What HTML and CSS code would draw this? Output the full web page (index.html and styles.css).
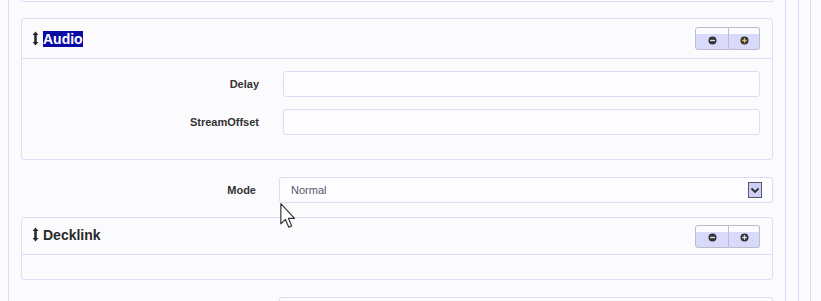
FILE: index.html
```html
<!DOCTYPE html>
<html lang="en">
<head>
    <meta charset="UTF-8">
    <title>Channel settings</title>
    <link rel="stylesheet" href="styles.css">
</head>
<body>
    <div class="frame-a">
        <div class="frame-b">
            <div class="frame-c">
                <div class="panel panel-prev"></div>

                <div class="panel">
                    <div class="panel-head head-audio">
                        <span class="title">
                            <svg class="sort-icon" width="7" height="15" viewBox="0 0 7 15"><path d="M3.5 0.5 L6.5 4 L0.5 4 Z M3.5 14.5 L6.5 11 L0.5 11 Z" fill="#2b2b2b"/><rect x="2.2" y="3" width="2.6" height="9" fill="#2b2b2b"/></svg>
                            <span class="selected">Audio</span>
                        </span>
                        <div class="btn-group">
                            <button class="tool-btn"><svg width="9" height="9" viewBox="0 0 9 9"><circle cx="4.5" cy="4.5" r="4" fill="#333"/><rect x="2" y="3.8" width="5" height="1.4" fill="#d8d8f0"/></svg></button>
                            <button class="tool-btn"><svg width="9" height="9" viewBox="0 0 9 9"><circle cx="4.5" cy="4.5" r="4" fill="#333"/><rect x="2.2" y="3.8" width="4.6" height="1.4" fill="#e8c070"/><rect x="3.8" y="2.2" width="1.4" height="4.6" fill="#e8c070"/></svg></button>
                        </div>
                    </div>
                    <div class="panel-body body-audio">
                        <div class="field">
                            <label for="delay">Delay</label>
                            <input type="text" id="delay">
                        </div>
                        <div class="field">
                            <label for="offset">StreamOffset</label>
                            <input type="text" id="offset">
                        </div>
                    </div>
                </div>

                <div class="field field-outer">
                    <label>Mode</label>
                    <div class="select">
                        <span>Normal</span>
                        <span class="arrow"><svg width="12" height="14" viewBox="0 0 12 14"><path d="M2.5 5.5 L6 9 L9.5 5.5" fill="none" stroke="#2a2a3a" stroke-width="1.8"/></svg></span>
                    </div>
                </div>

                <div class="panel panel-decklink">
                    <div class="panel-head head-decklink">
                        <span class="title">
                            <svg class="sort-icon" width="7" height="15" viewBox="0 0 7 15"><path d="M3.5 0.5 L6.5 4 L0.5 4 Z M3.5 14.5 L6.5 11 L0.5 11 Z" fill="#2b2b2b"/><rect x="2.2" y="3" width="2.6" height="9" fill="#2b2b2b"/></svg>
                            <span>Decklink</span>
                        </span>
                        <div class="btn-group">
                            <button class="tool-btn"><svg width="9" height="9" viewBox="0 0 9 9"><circle cx="4.5" cy="4.5" r="4" fill="#333"/><rect x="2" y="3.8" width="5" height="1.4" fill="#d8d8f0"/></svg></button>
                            <button class="tool-btn"><svg width="9" height="9" viewBox="0 0 9 9"><circle cx="4.5" cy="4.5" r="4" fill="#333"/><rect x="2.2" y="3.8" width="4.6" height="1.4" fill="#d8d8f0"/><rect x="3.8" y="2.2" width="1.4" height="4.6" fill="#d8d8f0"/></svg></button>
                        </div>
                    </div>
                    <div class="panel-body body-decklink"></div>
                </div>

                <div class="field field-outer field-next">
                    <label></label>
                    <div class="select"></div>
                </div>
            </div>
        </div>
    </div>

    <svg class="cursor" width="16" height="26" viewBox="0 0 12 20"><path d="M0.5 0.5 L0.5 16 L4 12.6 L6.6 18.6 L8.8 17.6 L6.3 11.8 L11 11.8 Z" fill="#fff" stroke="#333" stroke-width="0.9" stroke-linejoin="round"/></svg>
</body>
</html>
```

FILE: styles.css
```css
body {
    margin: 0;
    background: #fbfbfe;
    font-family: "Liberation Sans", Arial, sans-serif;
    color: #2e2e2e;
    overflow: hidden;
}
.frame-a {
    display: flex;
    box-sizing: border-box;
    width: 811px;
    height: 100vh;
    padding-right: 11px;
    border-right: 1px solid #d8d8fb;
}
.frame-b {
    display: flex;
    flex: 1;
    padding-right: 12px;
    border-right: 1px solid #d8d8fb;
}
.frame-c {
    flex: 1;
    margin-left: 8px;
    border-left: 1px solid #dedefa;
    border-right: 1px solid #d8d8fb;
}
.panel {
    margin: 0 12px;
    border: 1px solid #dedefa;
    border-radius: 3px;
    background: #fbfbfe;
}
.panel-prev {
    height: 1px;
    border-top: none;
    border-radius: 0 0 3px 3px;
    margin-bottom: 16px;
}
.panel-head {
    display: flex;
    align-items: center;
    justify-content: space-between;
    padding: 0 12px 0 10px;
    border-bottom: 1px solid #dedefa;
}
.head-audio {
    height: 39px;
}
.head-decklink {
    height: 36px;
}
.head-decklink .title {
    margin-bottom: 3px;
}
.title {
    display: flex;
    align-items: center;
    font-size: 14px;
    font-weight: bold;
    color: #2a2a2a;
}
.sort-icon {
    margin: 0 4px 0 0;
}
.selected {
    background: #0a0aa4;
    color: #fff;
    line-height: 16px;
}
.btn-group {
    display: flex;
}
.tool-btn {
    display: flex;
    align-items: center;
    justify-content: center;
    box-sizing: border-box;
    width: 34px;
    height: 23px;
    padding: 3px 0 0;
    margin: 0;
    border: 1px solid #bcbccc;
    background: linear-gradient(#fcfcff 0, #fcfcff 6px, #d9d9fb 6px);
    cursor: pointer;
}
.tool-btn:first-child {
    border-radius: 3px 0 0 3px;
}
.tool-btn + .tool-btn {
    border-left: none;
    width: 31px;
    border-radius: 0 3px 3px 0;
}
.body-audio {
    padding: 12px 12px 24px 0;
    display: flex;
    flex-direction: column;
    gap: 12px;
}
.body-decklink {
    height: 24px;
}
.field {
    display: grid;
    grid-template-columns: 237px 1fr;
    column-gap: 24px;
    align-items: center;
}
.field label {
    text-align: right;
    font-size: 11px;
    font-weight: bold;
    color: #333;
}
.field input {
    box-sizing: border-box;
    height: 26px;
    margin: 0;
    border: 1px solid #dcdcf8;
    border-radius: 3px;
    background: #fdfdff;
}
.field-outer {
    grid-template-columns: 235px 1fr;
    column-gap: 23px;
    margin: 17px 12px 14px;
}
.field-next {
    margin-top: 17px;
}
.select {
    box-sizing: border-box;
    display: flex;
    align-items: center;
    justify-content: space-between;
    height: 26px;
    padding: 0 10px 0 11px;
    border: 1px solid #dcdcf8;
    border-radius: 3px;
    background: #fdfdff;
    font-size: 11px;
    color: #585868;
}
.arrow {
    box-sizing: border-box;
    display: flex;
    align-items: center;
    justify-content: center;
    width: 14px;
    height: 16px;
    border: 1px solid #555566;
    background: #cfcff4;
}
.cursor {
    position: absolute;
    left: 280px;
    top: 203px;
}
```
